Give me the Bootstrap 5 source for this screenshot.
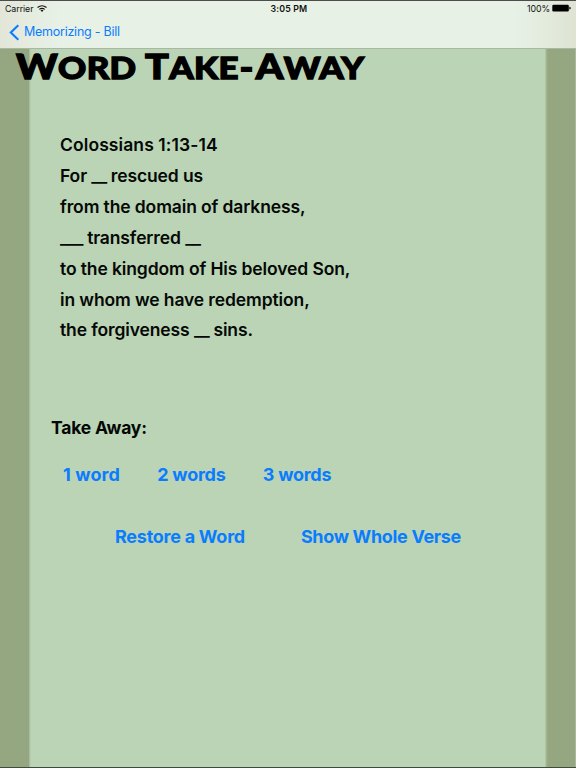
<!DOCTYPE html>
<html lang="en">
<head>
<meta charset="utf-8">
<meta name="viewport" content="width=device-width, initial-scale=1">
<title>Word Take-Away</title>
<link href="https://cdn.jsdelivr.net/npm/bootstrap@5.3.0/dist/css/bootstrap.min.css" rel="stylesheet">
<style>
body{font-family:Inter,"Liberation Sans",sans-serif;color:#050805;background:#bad4b5}
.screen{height:768px;border-top:1px solid #4c4c4c;border-bottom:1px solid #3f4b3c;
background:linear-gradient(90deg,#95a780 0 28.5px,#a9bf9b 29.5px,#bad4b5 31px 545px,#a5b995 546px,#95a780 548px 574.5px,#a9ba9a 575px)}
.topbar{height:48px;border-bottom:1px solid #a9b8a3;background:linear-gradient(90deg,#e2e6d8 0,#e5ebdf 25px,#e7f1e6 60px 515px,#e3ebdd 545px,#dee3d3 576px)}
.status{height:15px;font-size:8.8px;line-height:15px;padding:0 5px;color:#111}
.status>*{flex:1 1 0}
.status>*>span{letter-spacing:-.06px}
.clock{font-weight:600;letter-spacing:.15px;padding-left:2px}
.wifi{width:10px;height:7px;margin:-1px 0 0 4px}
.batt{width:19px;height:8px;margin:-1px 0 0 2px}
.back{height:32px;padding-left:9px;font-size:12.5px;color:#0a7cff;letter-spacing:-.25px}
.back svg{width:11px;height:17px;margin-right:4px}
.heading{font-family:Lato,sans-serif;font-weight:900;font-size:30px;line-height:38px;height:38px;color:#000;margin:-2px 0 0 16px;white-space:nowrap;-webkit-text-stroke:1.3px #000;transform:scaleX(1.16);transform-origin:0 0;word-spacing:0;letter-spacing:.3px}
.heading b{font-weight:900;font-size:34px}
.heading .dash{padding:0 2px 0 1px;-webkit-text-stroke-width:1.8px}
.verse{padding:45px 0 0 60px;font-size:17.5px;font-weight:600;line-height:30.8px;white-space:nowrap;letter-spacing:-.12px}
.verse .ref{letter-spacing:.09px;margin-bottom:.6px}
.verse i{font-style:normal;letter-spacing:-.6px}
.take{padding:67.4px 0 0 51px;font-size:17.5px;font-weight:700;line-height:28px;letter-spacing:-.2px}
.lnk{font-size:18px;font-weight:700;line-height:28px;color:#0a7cff;white-space:nowrap;letter-spacing:-.26px}
.lnk.one{letter-spacing:.1px}
.counts{padding:19.5px 0 0 63px;gap:37.3px}
.actions{padding:33.5px 0 0 115px;gap:56px}
.actions .whole{letter-spacing:-.33px}
</style>
</head>
<body>
<div class="screen overflow-hidden">
<header class="topbar">
<div class="status d-flex">
<div class="d-flex align-items-center"><span>Carrier</span>
<svg class="wifi" viewBox="0 0 10 7" fill="none" stroke="#111" stroke-width="1.2"><path d="M.5 2.5Q5-1 9.5 2.5M2.3 4.4Q5 2.2 7.7 4.4"/><path d="M3.5 5.3Q5 4.2 6.5 5.3L5 7Z" fill="#111" stroke="none"/></svg></div>
<div class="clock text-center">3:05 PM</div>
<div class="d-flex align-items-center justify-content-end"><span>100%</span>
<svg class="batt" viewBox="0 0 19 8"><rect x=".3" y=".7" width="16.5" height="6.8" rx="1.3"/><path d="M17.3 2.8Q18.8 3 18.8 4.1T17.3 5.4Z"/></svg></div>
</div>
<a href="#" class="back d-flex align-items-center text-decoration-none"><svg viewBox="0 0 11 17" fill="none" stroke="#0a7cff" stroke-width="2.1"><path d="M9.3 1.2 1.8 8.5l7.5 7.3"/></svg><span>Memorizing - Bill</span></a>
</header>
<main>
<h1 class="heading"><b>W</b>ORD <b>T</b>AKE<span class="dash">-</span><b>A</b>WAY</h1>
<div class="verse">
<div class="ref">Colossians 1:13-14</div>
<div>For <i>__</i> rescued us</div>
<div>from the domain of darkness,</div>
<div><i>___</i> transferred <i>__</i></div>
<div>to the kingdom of His beloved Son,</div>
<div>in whom we have redemption,</div>
<div>the forgiveness <i>__</i> sins.</div>
</div>
<div class="take">Take Away:</div>
<div class="counts d-flex"><a href="#" class="lnk one text-decoration-none">1 word</a><a href="#" class="lnk text-decoration-none">2 words</a><a href="#" class="lnk text-decoration-none">3 words</a></div>
<div class="actions d-flex"><a href="#" class="lnk text-decoration-none">Restore a Word</a><a href="#" class="lnk whole text-decoration-none">Show Whole Verse</a></div>
</main>
</div>
<script src="https://cdn.jsdelivr.net/npm/bootstrap@5.3.0/dist/js/bootstrap.bundle.min.js"></script>
</body>
</html>
